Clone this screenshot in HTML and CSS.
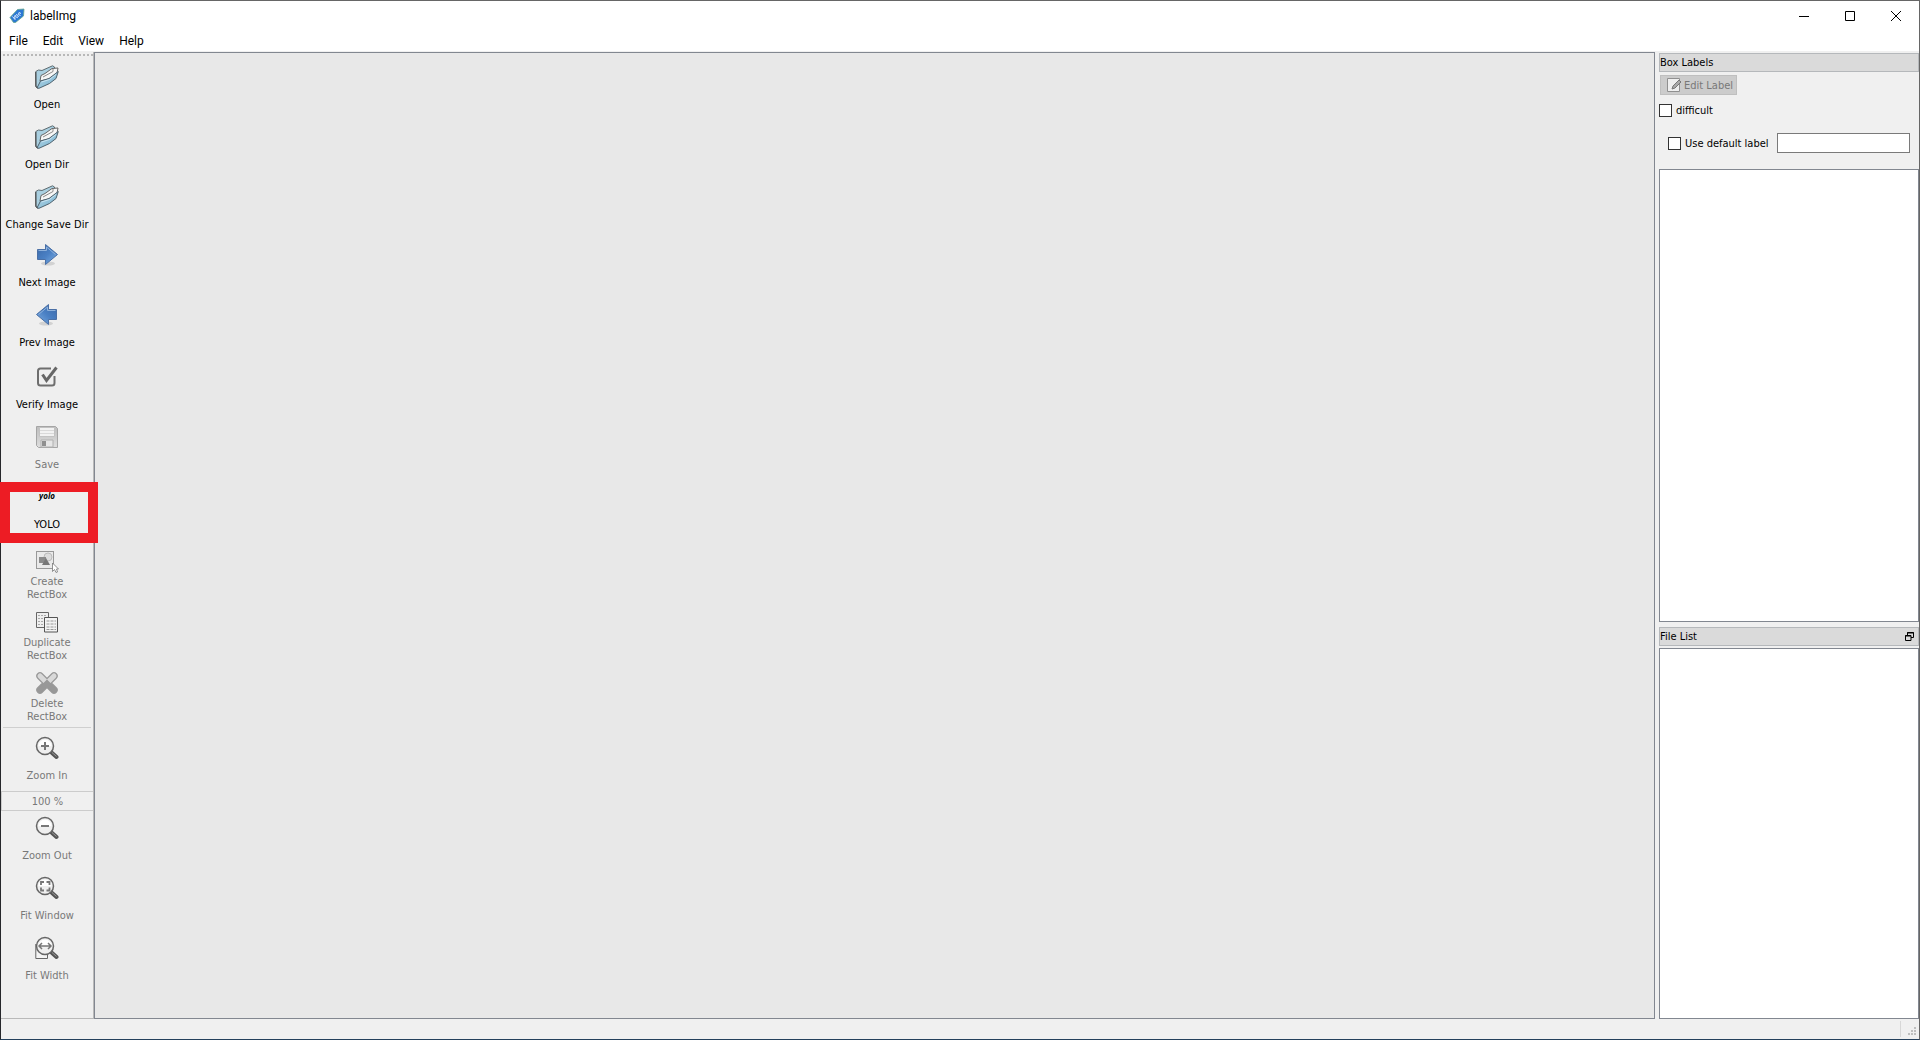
FILE: index.html
```html
<!DOCTYPE html>
<html lang="en">
<head>
<meta charset="utf-8">
<title>labelImg</title>
<link rel="stylesheet" href="styles.css">
</head>
<body>
<svg class="defs" width="0" height="0" aria-hidden="true">
  <defs>
    <linearGradient id="gBlue" x1="0" y1="0" x2="1" y2="1"><stop offset="0" stop-color="#3a68a8"/><stop offset=".5" stop-color="#4a80c4"/><stop offset="1" stop-color="#7fb0e4"/></linearGradient>
    <linearGradient id="gFolder" x1="0" y1="0" x2="1" y2="1"><stop offset="0" stop-color="#b4d5e4"/><stop offset="1" stop-color="#79b4d2"/></linearGradient>
    <linearGradient id="gGrey" x1="0" y1="0" x2="0" y2="1"><stop offset="0" stop-color="#efefef"/><stop offset=".4" stop-color="#c4c4c4"/><stop offset=".55" stop-color="#8c8c8c"/><stop offset="1" stop-color="#a4a4a4"/></linearGradient>
    <linearGradient id="gDisk" x1="0" y1="0" x2="0" y2="1"><stop offset="0" stop-color="#bdbdbd"/><stop offset="1" stop-color="#dedede"/></linearGradient>
    <symbol id="folder" viewBox="0 0 24 24">
      <path d="M.8 6.500 3.500 5 7 5.500 17.500 .8 19.500 2 20 8 4 22.500 1 21.500Z" fill="#a9cfe0" stroke="#5f6b70"/>
      <path d="M5 16 6 10.500 10 8.500 17 3.500 23 3 22 8 14 14Z" fill="#f6f6f6" stroke="#666"/>
      <path d="M8 12 18 6.500V4" fill="none" stroke="#8a8a8a"/>
      <path d="M2 23 5.500 16 14 13.500 23.300 6.500 21 13.500 14.500 18.500 4 23.300Z" fill="url(#gFolder)" stroke="#4f626e"/>
      <path d="M6.500 17 14.500 14.500 21 9.500" fill="none" stroke="#dcf1fa" stroke-width=".7"/>
      <path d="M.8 7V21.500L2.500 23.300" fill="none" stroke="#444"/>
    </symbol>
    <symbol id="arrow" viewBox="0 0 24 24">
      <ellipse cx="13" cy="20.500" rx="7" ry="2" fill="#000" opacity=".12"/>
      <path d="M2.500 6.500H10.500V1.500L22.500 11.500 10.500 21.500V16.500H2.500Z" fill="url(#gBlue)" stroke="#4a6fa5"/>
      <path d="M3.500 7.500H11.500V4L20.500 11.500" fill="none" stroke="#8fb2dc"/>
    </symbol>
    <symbol id="lens" viewBox="0 0 24 24">
      <path d="M16.500 16.500 21.500 21" stroke="#555" stroke-width="4" stroke-linecap="round"/>
      <path d="M17 16.500 21.500 20.500" stroke="#999" stroke-width="1"/>
      <circle cx="10" cy="10" r="8.500" fill="#efefef" stroke="#666" stroke-width="1.500"/>
      <path d="M3.500 10A6.500 6.500 0 0 1 16.500 10Z" fill="#fff"/>
    </symbol>
  </defs>
</svg>

<div class="window">
  <header class="titlebar">
    <svg class="app-icon" viewBox="0 0 16 16" aria-hidden="true">
      <path d="M1 9.500 8.500 1.500 15 1 14.500 8 6.500 14.500 4.500 14.500Z" fill="#2b78d4" stroke="#62a48d" stroke-width=".8"/>
      <path d="M3.500 8.500 6 11.500 5.700 7.500M7.500 6.500 6.300 8.200 8.300 9.700 9.500 8Z M12 5.500 10 4.500 9.500 6.500 11.500 7.500" fill="none" stroke="#dcecff"/>
    </svg>
    <h1 class="app-title">labelImg</h1>
    <div class="window-controls">
      <button class="wc" aria-label="Minimize"><svg viewBox="0 0 12 12"><path d="M1 6.500H11" /></svg></button>
      <button class="wc" aria-label="Maximize"><svg viewBox="0 0 12 12"><path d="M1.500 1.500H10.500V10.500H1.500Z" /></svg></button>
      <button class="wc" aria-label="Close"><svg viewBox="0 0 12 12"><path d="M1 1 11 11M11 1 1 11" /></svg></button>
    </div>
  </header>

  <nav class="menubar">
    <button>File</button><button>Edit</button><button>View</button><button>Help</button>
  </nav>

  <main class="workspace">
    <aside class="toolbar" aria-label="Tools">
      <div class="handle"></div>
      <button class="tool"><svg><use href="#folder"/></svg><span>Open</span></button>
      <button class="tool"><svg><use href="#folder"/></svg><span>Open Dir</span></button>
      <button class="tool"><svg><use href="#folder"/></svg><span>Change Save Dir</span></button>
      <button class="tool nav"><svg><use href="#arrow"/></svg><span>Next Image</span></button>
      <button class="tool nav"><svg viewBox="0 0 24 24"><g transform="translate(24 0) scale(-1 1)"><use href="#arrow" width="24" height="24"/></g></svg><span>Prev Image</span></button>
      <button class="tool"><svg viewBox="0 0 24 24"><path d="M16 3.500H5.500Q3 3.500 3 6V18Q3 20.500 5.500 20.500H17Q19.500 20.500 19.500 18V11" fill="none" stroke="#6e6e6e" stroke-width="2"/><path d="M7.500 9.500 11.500 15.500 21.500 2.500" fill="none" stroke="#666" stroke-width="3"/></svg><span>Verify Image</span></button>
      <button class="tool" disabled><svg viewBox="0 0 24 24"><path d="M1.500 1.500H20.500L22.500 3.500V22.500H3.500L1.500 20.500Z" fill="url(#gDisk)" stroke="#a5a5a5"/><path d="M4.500 2.500H19.500V11.500H4.500Z" fill="#f2f2f2" stroke="#c2c2c2"/><path d="M5 5.500H19M5 8.500H19" stroke="#d9d9d9"/><path d="M6 15H18V22H6Z" fill="#e6e6e6" stroke="#b0b0b0"/><path d="M7 16H11V21H7Z" fill="#8f8f8f"/></svg><span>Save</span></button>
      <button class="tool marked"><i class="wordmark">yolo</i><span>YOLO</span></button>

      <div class="shapes">
        <button class="tool tall" disabled><svg viewBox="0 0 24 24"><path d="M1.500 2.500H18.500V19.500H1.500Z" fill="#e9e9e9" stroke="#444" stroke-dasharray="1 1"/><circle cx="13" cy="8" r="4" fill="#ddd" stroke="#bbb"/><path d="M4 8H11V14H4Z" fill="#8b8b8b"/><path d="M11 9 15 16H7Z" fill="#777"/><path d="M17.500 14V22.500L19.500 20.500 21 23.500 22.500 23 21.500 20H23.500Z" fill="#fff" stroke="#777" stroke-width=".8"/></svg><span>Create<br>RectBox</span></button>
        <button class="tool tall" disabled><svg viewBox="0 0 24 24"><path d="M1.500 2.500H13.500V17.500H1.500Z" fill="#eee" stroke="#666"/><path d="M3 5.500H12M3 8.500H12M3 11.500H12M3 14.500H12" stroke="#aaa" stroke-dasharray="2 1"/><path d="M9.500 7.500H22.500V22H9.500Z" fill="#f3f3f3" stroke="#555"/><path d="M11.500 11H21M11.500 14H21M11.500 17H21M11.500 19.500H21" stroke="#999" stroke-dasharray="3 1"/></svg><span>Duplicate<br>RectBox</span></button>
        <button class="tool tall" disabled><svg viewBox="0 0 24 24"><path d="M5 5 12 12 19 5M5 19 12 12 19 19" fill="none" stroke="#999" stroke-width="7.500" stroke-linecap="round"/><path d="M5 5 12 12 19 5" fill="none" stroke="#d9d9d9" stroke-width="5" stroke-linecap="round"/><path d="M5 19 12 12 19 19" fill="none" stroke="#989898" stroke-width="5" stroke-linecap="round"/></svg><span>Delete<br>RectBox</span></button>
      </div>

      <hr class="rule">
      <button class="tool" disabled><svg viewBox="0 0 24 24"><use href="#lens"/><path d="M6 10H14M10 6V14" stroke="#777" stroke-width="2"/></svg><span>Zoom In</span></button>
      <input class="zoom" value="100 %" aria-label="Zoom level" disabled>
      <button class="tool" disabled><svg viewBox="0 0 24 24"><use href="#lens"/><path d="M6 10H14" stroke="#777" stroke-width="2"/></svg><span>Zoom Out</span></button>
      <button class="tool" disabled><svg viewBox="0 0 24 24"><use href="#lens"/><path d="M6 9V6H9M11.500 6H14.500V9M14.500 11.500V14.500H11.500M9 14.500H6V11.500" fill="none" stroke="#777" stroke-width="1.800"/></svg><span>Fit Window</span></button>
      <button class="tool" disabled><svg viewBox="0 0 24 24"><path d="M.8 8V22.500H12.500V17" fill="#f4f4f4" stroke="#666"/><use href="#lens"/><path d="M4 10H16M7 7 4 10 7 13M13 7 16 10 13 13" fill="none" stroke="#777" stroke-width="1.500"/></svg><span>Fit Width</span></button>
    </aside>

    <section class="canvas" aria-label="Image canvas"></section>

    <aside class="docks">
      <section class="dock">
        <h2 class="dock-title">Box Labels</h2>
        <div class="dock-tools">
          <button class="edit" disabled><svg viewBox="0 0 16 16"><path d="M1.500 1.500H13.500V14.500H1.500Z" fill="#efefef" stroke="#909090"/><path d="M6 12 7 9 13 3 15 5 9 11Z" fill="#aaa" stroke="#777"/></svg>Edit Label</button>
          <label class="check"><input type="checkbox">difficult</label>
          <div class="default-row">
            <label class="check"><input type="checkbox">Use default label</label>
            <input class="text" type="text" aria-label="Default label">
          </div>
        </div>
        <div class="list"></div>
      </section>
      <section class="dock">
        <h2 class="dock-title">File List<button class="float" aria-label="Float"><svg viewBox="0 0 9 9"><path d="M2.500 3V.5H8.500V5.500H6M2 1H9M.5 3.500H6V8.500H.5ZM0 4H6" /></svg></button></h2>
        <div class="list"></div>
      </section>
    </aside>
  </main>

  <footer class="statusbar">
    <svg class="grip" viewBox="0 0 8 8"><path d="M6 0H8V2H6ZM3 3H5V5H3ZM6 3H8V5H6ZM0 6H2V8H0ZM3 6H5V8H3ZM6 6H8V8H6Z" fill="#bfbfbf"/></svg>
  </footer>
</div>
</body>
</html>
```
FILE: styles.css
```css
*, *::after { box-sizing: border-box; }

body {
  margin: 0;
  font: 11px/13px "DejaVu Sans Condensed", "DejaVu Sans", Tahoma, sans-serif;
  color: #000;
}

button, input { font: inherit; color: inherit; }
button { border: 0; padding: 0; background: none; }
h1, h2 { margin: 0; font-weight: normal; }
.defs { display: block; position: absolute; }

.window {
  display: flex;
  flex-direction: column;
  height: 100vh;
  border: 1px solid #666;
  border-left-color: #26272b;
  border-bottom-color: #24405c;
  background: #f0f0f0;
}

/* Title bar and menus */
.titlebar {
  display: flex;
  align-items: center;
  height: 29px;
  padding-left: 8px;
  background: #fff;
}
.app-icon { width: 16px; height: 16px; margin-right: 5px; }
.app-title, .menubar { font-family: Roboto, "Segoe UI", sans-serif; font-size: 12px; line-height: 16px; }
.window-controls { display: flex; margin-left: auto; }
.wc { width: 46px; height: 28px; display: grid; place-items: center; }
.wc svg { width: 12px; height: 12px; fill: none; stroke: #000; }

.menubar {
  display: flex;
  gap: 15px;
  height: 21px;
  padding-left: 8px;
  background: #fff;
}

.workspace { flex: 1; min-height: 0; display: flex; padding-top: 1px; }

/* Left toolbar */
.toolbar {
  display: flex;
  flex-direction: column;
  flex: none;
  width: 93px;
  border-right: 1px solid #b9b9b9;
  border-bottom: 1px solid #b9b9b9;
  background: #efefef;
}
.handle {
  flex: none;
  height: 2px;
  margin: 2px 0 3px 2px;
  background: repeating-linear-gradient(90deg, #b8b8b8 0 2px, transparent 2px 4px);
}
.tool {
  flex: none;
  display: flex;
  flex-direction: column;
  align-items: center;
  gap: 9px;
  height: 60px;
  padding-top: 6px;
  line-height: 14px;
  white-space: nowrap;
}
.tool svg { width: 24px; height: 24px; flex: none; }
.tool:disabled, .zoom:disabled, .edit:disabled { color: #787878; }
.nav { position: relative; top: -2px; }
.tall { height: 60px; padding-top: 9px; gap: 2px; line-height: 13px; }
.shapes { display: flex; flex-direction: column; margin-top: 1px; gap: 1px; }

.wordmark { height: 24px; font: italic bold 8px/22px "Open Sans", sans-serif; }
.marked { position: relative; }
.marked::after {
  content: "";
  position: absolute;
  z-index: 1;
  top: 3px;
  left: -1px;
  width: 98px;
  height: 61px;
  border: 10px solid #ed1c24;
}

.rule {
  flex: none;
  width: 88px;
  height: 1px;
  margin: 5px auto 2px;
  border: 0;
  background: #cfcfcf;
}
.zoom {
  flex: none;
  width: 100%;
  height: 20px;
  margin: 1px 0 -1px;
  padding: 0;
  border: 1px solid #ccc;
  border-right: 0;
  background: #f0f0f0;
  text-align: center;
}

/* Centre */
.canvas { flex: 1; border: 1px solid #828790; background: #e8e8e8; }

/* Right docks */
.docks {
  display: grid;
  grid-template-rows: 569fr 392fr;
  gap: 5px;
  flex: none;
  width: 264px;
  padding: 1px 0 0 4px;
}
.dock { display: flex; flex-direction: column; min-height: 0; }
.dock-title {
  display: flex;
  align-items: center;
  flex: none;
  height: 19px;
  border: 1px solid #b5b8bb;
  background: #dadada;
  font-size: 11px;
  line-height: 17px;
}
.float { margin-left: auto; margin-right: 4px; display: flex; }
.float svg { width: 9px; height: 9px; fill: none; stroke: #000; }
.dock-tools { display: flex; flex-direction: column; align-items: flex-start; padding-top: 3px; }
.edit {
  display: flex;
  align-items: center;
  gap: 2px;
  width: 77px;
  height: 20px;
  margin-left: 1px;
  padding-left: 5px;
  border: 1px solid #bfbfbf;
  background: #ccc;
  white-space: nowrap;
}
.edit svg { width: 16px; height: 16px; flex: none; }
.check { display: flex; align-items: center; gap: 4px; white-space: nowrap; }
.check input {
  appearance: none;
  width: 13px;
  height: 13px;
  margin: 0;
  border: 1px solid #333;
  background: #fff;
}
.dock-tools > .check { margin-top: 9px; }
.default-row {
  display: flex;
  align-items: center;
  justify-content: space-between;
  align-self: stretch;
  margin: 16px 9px 16px;
}
.text { width: 133px; height: 20px; padding: 0 3px; border: 1px solid #7a7a7a; background: #fff; }
.list { flex: 1; border: 1px solid #828790; background: #fff; }
.dock-title + .list { margin-top: 2px; }

.statusbar {
  flex: none;
  display: flex;
  justify-content: flex-end;
  align-items: flex-end;
  height: 20px;
  padding: 2px 3px 2px 0;
}
.grip {
  box-sizing: content-box;
  width: 8px;
  height: 8px;
  padding: 6px 0 2px 7px;
  border-left: 1px solid #d7d7d7;
}
```
